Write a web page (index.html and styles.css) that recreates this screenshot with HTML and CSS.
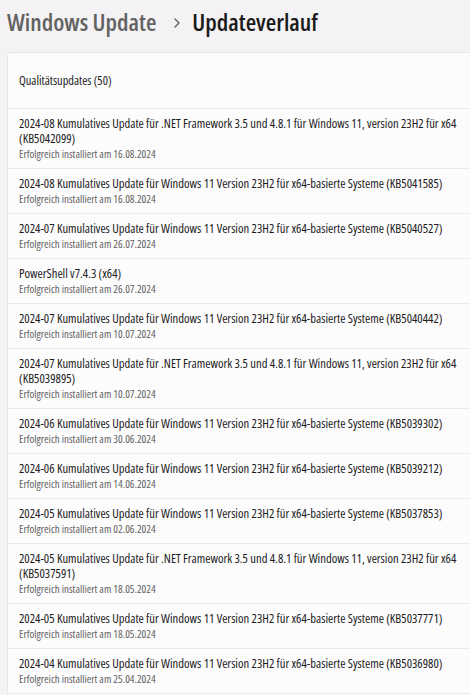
FILE: index.html
```html
<!DOCTYPE html>
<html lang="de">
<head>
<meta charset="utf-8">
<title>Updateverlauf</title>
<link rel="stylesheet" href="styles.css">
</head>
<body>
<div class="page">
  <header class="breadcrumb">
    <span class="crumb-parent">Windows Update</span>
    <svg class="chev" width="6" height="10" viewBox="0 0 6 10"><polyline points="1,1 5,5 1,9" fill="none" stroke="#5f5f5f" stroke-width="1.3" stroke-linecap="round" stroke-linejoin="round"/></svg>
    <span class="crumb-current">Updateverlauf</span>
  </header>

  <section class="card">
    <div class="card-head">Qualitätsupdates (50)</div>
    <div class="item"><div class="name">2024-08 Kumulatives Update für .NET Framework 3.5 und 4.8.1 für Windows 11, version 23H2 für x64 (KB5042099)</div><div class="date">Erfolgreich installiert am 16.08.2024</div></div>
    <div class="item"><div class="name">2024-08 Kumulatives Update für Windows 11 Version 23H2 für x64-basierte Systeme (KB5041585)</div><div class="date">Erfolgreich installiert am 16.08.2024</div></div>
    <div class="item"><div class="name">2024-07 Kumulatives Update für Windows 11 Version 23H2 für x64-basierte Systeme (KB5040527)</div><div class="date">Erfolgreich installiert am 26.07.2024</div></div>
    <div class="item"><div class="name">PowerShell v7.4.3 (x64)</div><div class="date">Erfolgreich installiert am 26.07.2024</div></div>
    <div class="item"><div class="name">2024-07 Kumulatives Update für Windows 11 Version 23H2 für x64-basierte Systeme (KB5040442)</div><div class="date">Erfolgreich installiert am 10.07.2024</div></div>
    <div class="item"><div class="name">2024-07 Kumulatives Update für .NET Framework 3.5 und 4.8.1 für Windows 11, version 23H2 für x64 (KB5039895)</div><div class="date">Erfolgreich installiert am 10.07.2024</div></div>
    <div class="item"><div class="name">2024-06 Kumulatives Update für Windows 11 Version 23H2 für x64-basierte Systeme (KB5039302)</div><div class="date">Erfolgreich installiert am 30.06.2024</div></div>
    <div class="item"><div class="name">2024-06 Kumulatives Update für Windows 11 Version 23H2 für x64-basierte Systeme (KB5039212)</div><div class="date">Erfolgreich installiert am 14.06.2024</div></div>
    <div class="item"><div class="name">2024-05 Kumulatives Update für Windows 11 Version 23H2 für x64-basierte Systeme (KB5037853)</div><div class="date">Erfolgreich installiert am 02.06.2024</div></div>
    <div class="item"><div class="name">2024-05 Kumulatives Update für .NET Framework 3.5 und 4.8.1 für Windows 11, version 23H2 für x64 (KB5037591)</div><div class="date">Erfolgreich installiert am 18.05.2024</div></div>
    <div class="item"><div class="name">2024-05 Kumulatives Update für Windows 11 Version 23H2 für x64-basierte Systeme (KB5037771)</div><div class="date">Erfolgreich installiert am 18.05.2024</div></div>
    <div class="item"><div class="name">2024-04 Kumulatives Update für Windows 11 Version 23H2 für x64-basierte Systeme (KB5036980)</div><div class="date">Erfolgreich installiert am 25.04.2024</div></div>
  </section>
</div>
</body>
</html>
```
FILE: styles.css
```css
html, body {
  margin: 0;
  padding: 0;
  background: #f4f2f4;
  overflow: hidden;
}
body {
  font-family: "Open Sans", "Noto Sans", sans-serif;
  font-stretch: 80%;
  color: #1b1b1b;
}
.page {
  padding: 7px 0 0 7px;
}
.breadcrumb {
  display: flex;
  align-items: center;
  height: 30px;
  line-height: 30px;
  font-size: 24px;
  font-weight: 550;
  white-space: nowrap;
}
.crumb-parent {
  color: #626262;
}
.chev {
  margin: 2px 12px 0 18px;
  flex: none;
}
.crumb-current {
  color: #1a1a1a;
}
.card {
  margin-top: 15px;
  margin-right: -20px;
  padding-bottom: 20px;
  background: #fdfcfd;
  border: 1px solid #e8e6e8;
  border-right: none;
  border-radius: 4px 0 0 4px;
}
.card-head {
  height: 55px;
  display: flex;
  align-items: center;
  padding-left: 11px;
  font-size: 12.4px;
  color: #1b1b1b;
}
.item {
  border-top: 1px solid #ebe9eb;
  padding: 7px 14px 7px 11px;
}
.item:last-child {
  border-bottom: 1px solid #ebe9eb;
}
.name {
  font-size: 12.6px;
  line-height: 15px;
  color: #1b1b1b;
}
.date {
  font-size: 11px;
  line-height: 15px;
  color: #616161;
}
```
